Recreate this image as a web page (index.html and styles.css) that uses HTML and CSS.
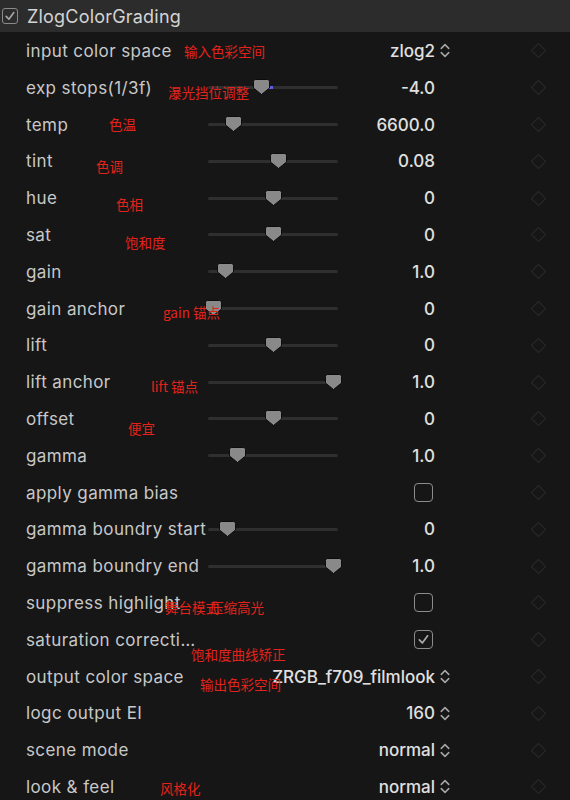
FILE: index.html
```html
<html lang="en">
<head>
  <meta charset="UTF-8" />
  <title>ZlogColorGrading</title>
  <link rel="stylesheet" href="styles.css">
</head>
<body>
  <div class="panel">
    <div class="header">
      <span class="box checked">
        <svg viewBox="0 0 12 12" width="12" height="12"><path d="M2.2 6.4 L4.9 9.2 L9.8 2.6" /></svg>
      </span>
      <span class="title">ZlogColorGrading</span>
    </div>

    <div class="rows">
      <div class="row">
        <span class="label">input color space</span>
        <span class="val select">zlog2<svg class="chev" viewBox="0 0 9 14"><path d="M1 5 L4.5 1.5 L8 5 M1 9 L4.5 12.5 L8 9" /></svg></span>
        <span class="key"></span>
        <span class="note n-input">输入色彩空间</span>
      </div>
      <div class="row">
        <span class="label">exp stops(1/3f)</span>
        <span class="slider" style="--v:0.4"><i class="fill"></i><svg class="thumb" viewBox="0 0 17 16"><path d="M2.5 0.5 H14.5 Q16.5 0.5 16.5 2.5 V9 L8.5 15.5 L0.5 9 V2.5 Q0.5 0.5 2.5 0.5Z" /></svg></span>
        <span class="val num">-4.0</span>
        <span class="key"></span>
        <span class="note n-exp">瀑光挡位调整</span>
      </div>
      <div class="row">
        <span class="label">temp</span>
        <span class="slider" style="--v:0.167"><svg class="thumb" viewBox="0 0 17 16"><path d="M2.5 0.5 H14.5 Q16.5 0.5 16.5 2.5 V9 L8.5 15.5 L0.5 9 V2.5 Q0.5 0.5 2.5 0.5Z" /></svg></span>
        <span class="val num">6600.0</span>
        <span class="key"></span>
        <span class="note n-temp">色温</span>
      </div>
      <div class="row">
        <span class="label">tint</span>
        <span class="slider" style="--v:0.542"><svg class="thumb" viewBox="0 0 17 16"><path d="M2.5 0.5 H14.5 Q16.5 0.5 16.5 2.5 V9 L8.5 15.5 L0.5 9 V2.5 Q0.5 0.5 2.5 0.5Z" /></svg></span>
        <span class="val num">0.08</span>
        <span class="key"></span>
        <span class="note n-tint">色调</span>
      </div>
      <div class="row">
        <span class="label">hue</span>
        <span class="slider" style="--v:0.5"><svg class="thumb" viewBox="0 0 17 16"><path d="M2.5 0.5 H14.5 Q16.5 0.5 16.5 2.5 V9 L8.5 15.5 L0.5 9 V2.5 Q0.5 0.5 2.5 0.5Z" /></svg></span>
        <span class="val num">0</span>
        <span class="key"></span>
        <span class="note n-hue">色相</span>
      </div>
      <div class="row">
        <span class="label">sat</span>
        <span class="slider" style="--v:0.5"><svg class="thumb" viewBox="0 0 17 16"><path d="M2.5 0.5 H14.5 Q16.5 0.5 16.5 2.5 V9 L8.5 15.5 L0.5 9 V2.5 Q0.5 0.5 2.5 0.5Z" /></svg></span>
        <span class="val num">0</span>
        <span class="key"></span>
        <span class="note n-sat">饱和度</span>
      </div>
      <div class="row">
        <span class="label">gain</span>
        <span class="slider" style="--v:0.108"><svg class="thumb" viewBox="0 0 17 16"><path d="M2.5 0.5 H14.5 Q16.5 0.5 16.5 2.5 V9 L8.5 15.5 L0.5 9 V2.5 Q0.5 0.5 2.5 0.5Z" /></svg></span>
        <span class="val num">1.0</span>
        <span class="key"></span>
      </div>
      <div class="row">
        <span class="label">gain anchor</span>
        <span class="slider" style="--v:0"><svg class="thumb" viewBox="0 0 17 16"><path d="M2.5 0.5 H14.5 Q16.5 0.5 16.5 2.5 V9 L8.5 15.5 L0.5 9 V2.5 Q0.5 0.5 2.5 0.5Z" /></svg></span>
        <span class="val num">0</span>
        <span class="key"></span>
        <span class="note n-gainanchor">gain 锚点</span>
      </div>
      <div class="row">
        <span class="label">lift</span>
        <span class="slider" style="--v:0.5"><svg class="thumb" viewBox="0 0 17 16"><path d="M2.5 0.5 H14.5 Q16.5 0.5 16.5 2.5 V9 L8.5 15.5 L0.5 9 V2.5 Q0.5 0.5 2.5 0.5Z" /></svg></span>
        <span class="val num">0</span>
        <span class="key"></span>
      </div>
      <div class="row">
        <span class="label">lift anchor</span>
        <span class="slider" style="--v:1"><svg class="thumb" viewBox="0 0 17 16"><path d="M2.5 0.5 H14.5 Q16.5 0.5 16.5 2.5 V9 L8.5 15.5 L0.5 9 V2.5 Q0.5 0.5 2.5 0.5Z" /></svg></span>
        <span class="val num">1.0</span>
        <span class="key"></span>
        <span class="note n-liftanchor">lift 锚点</span>
      </div>
      <div class="row">
        <span class="label">offset</span>
        <span class="slider" style="--v:0.5"><svg class="thumb" viewBox="0 0 17 16"><path d="M2.5 0.5 H14.5 Q16.5 0.5 16.5 2.5 V9 L8.5 15.5 L0.5 9 V2.5 Q0.5 0.5 2.5 0.5Z" /></svg></span>
        <span class="val num">0</span>
        <span class="key"></span>
        <span class="note n-offset">便宜</span>
      </div>
      <div class="row">
        <span class="label">gamma</span>
        <span class="slider" style="--v:0.2"><svg class="thumb" viewBox="0 0 17 16"><path d="M2.5 0.5 H14.5 Q16.5 0.5 16.5 2.5 V9 L8.5 15.5 L0.5 9 V2.5 Q0.5 0.5 2.5 0.5Z" /></svg></span>
        <span class="val num">1.0</span>
        <span class="key"></span>
      </div>
      <div class="row">
        <span class="label">apply gamma bias</span>
        <span class="val check"><span class="box big"></span></span>
        <span class="key"></span>
      </div>
      <div class="row">
        <span class="label">gamma boundry start</span>
        <span class="slider" style="--v:0.117"><svg class="thumb" viewBox="0 0 17 16"><path d="M2.5 0.5 H14.5 Q16.5 0.5 16.5 2.5 V9 L8.5 15.5 L0.5 9 V2.5 Q0.5 0.5 2.5 0.5Z" /></svg></span>
        <span class="val num">0</span>
        <span class="key"></span>
      </div>
      <div class="row">
        <span class="label">gamma boundry end</span>
        <span class="slider" style="--v:1"><svg class="thumb" viewBox="0 0 17 16"><path d="M2.5 0.5 H14.5 Q16.5 0.5 16.5 2.5 V9 L8.5 15.5 L0.5 9 V2.5 Q0.5 0.5 2.5 0.5Z" /></svg></span>
        <span class="val num">1.0</span>
        <span class="key"></span>
      </div>
      <div class="row">
        <span class="label">suppress highlight</span>
        <span class="val check"><span class="box big"></span></span>
        <span class="key"></span>
        <span class="note n-stage">舞台模式</span>
        <span class="note n-suppress">压缩高光</span>
      </div>
      <div class="row">
        <span class="label short">saturation correction</span>
        <span class="val check"><span class="box big checked"><svg viewBox="0 0 12 12" width="13" height="13"><path d="M2.2 6.4 L4.9 9.2 L9.8 2.6" /></svg></span></span>
        <span class="key"></span>
        <span class="note n-satcorr">饱和度曲线矫正</span>
      </div>
      <div class="row">
        <span class="label">output color space</span>
        <span class="val select">ZRGB_f709_filmlook<svg class="chev" viewBox="0 0 9 14"><path d="M1 5 L4.5 1.5 L8 5 M1 9 L4.5 12.5 L8 9" /></svg></span>
        <span class="key"></span>
        <span class="note n-output">输出色彩空间</span>
      </div>
      <div class="row">
        <span class="label">logc output EI</span>
        <span class="val select">160<svg class="chev" viewBox="0 0 9 14"><path d="M1 5 L4.5 1.5 L8 5 M1 9 L4.5 12.5 L8 9" /></svg></span>
        <span class="key"></span>
      </div>
      <div class="row">
        <span class="label">scene mode</span>
        <span class="val select">normal<svg class="chev" viewBox="0 0 9 14"><path d="M1 5 L4.5 1.5 L8 5 M1 9 L4.5 12.5 L8 9" /></svg></span>
        <span class="key"></span>
      </div>
      <div class="row">
        <span class="label">look &amp; feel</span>
        <span class="val select">normal<svg class="chev" viewBox="0 0 9 14"><path d="M1 5 L4.5 1.5 L8 5 M1 9 L4.5 12.5 L8 9" /></svg></span>
        <span class="key"></span>
        <span class="note n-look">风格化</span>
      </div>
    </div>
  </div>
</body>
</html>
```

FILE: styles.css
```css
* {
  margin: 0;
  padding: 0;
  box-sizing: border-box;
}

body {
  background: #161616;
  color: #c6c6c6;
  font-family: Inter, "Noto Sans", sans-serif;
  overflow: hidden;
}

.panel {
  width: 570px;
  height: 800px;
}

.header {
  height: 32px;
  background: #2c2c2c;
  display: flex;
  align-items: center;
  padding-left: 2px;
  gap: 9px;
}

.title {
  font-size: 18px;
  color: #d4d4d4;
  letter-spacing: 0.2px;
}

.box {
  width: 16px;
  height: 16px;
  border: 1.5px solid #8a8a8a;
  border-radius: 3px;
  display: flex;
  align-items: center;
  justify-content: center;
}

.box svg {
  fill: none;
  stroke: #a8a8a8;
  stroke-width: 1.6;
  stroke-linecap: round;
  stroke-linejoin: round;
}

.box.big {
  width: 19px;
  height: 19px;
  border-radius: 4px;
  border-color: #8c8c8c;
}

.rows {
  padding-top: 0.6px;
}

.row {
  position: relative;
  height: 36.8px;
  display: grid;
  grid-template-columns: 182px 130px 1fr 118px;
  align-items: center;
  padding-left: 26px;
}

.label {
  grid-column: 1;
  font-size: 17px;
  letter-spacing: 0.4px;
  white-space: nowrap;
  overflow: hidden;
  text-overflow: ellipsis;
  color: #c8c8c8;
}

.label.short {
  max-width: 173px;
}

.slider {
  grid-column: 2;
  position: relative;
  height: 3px;
  background: #2f2f2f;
  border-radius: 2px;
}

.fill {
  position: absolute;
  top: 0;
  left: calc(var(--v) * 120px + 5px);
  width: calc((0.5 - var(--v)) * 120px);
  height: 3px;
  background: #5c5ce8;
}

.thumb {
  position: absolute;
  width: 17px;
  height: 16px;
  top: -7px;
  left: calc(var(--v) * 120px - 3.5px);
}

.thumb path {
  fill: #898989;
  stroke: #0c0c0c;
  stroke-width: 1;
}

.val {
  grid-column: 3;
  display: flex;
  justify-content: flex-end;
  align-items: center;
  font-size: 17px;
  font-weight: 500;
  color: #e0e0e0;
  white-space: nowrap;
}

.val.num {
  padding-right: 17px;
}

.val.check {
  grid-column: 2 / 4;
  padding-right: 19px;
}

.val.select {
  grid-column: 2 / 4;
  padding-right: 2px;
  gap: 5px;
}

.chev {
  width: 10px;
  height: 15px;
  fill: none;
  stroke: #a6a6a6;
  stroke-width: 1.4;
  stroke-linecap: round;
  stroke-linejoin: round;
}

.key {
  grid-column: 4;
  justify-self: start;
  margin-left: 81px;
  width: 11px;
  height: 11px;
  border: 1.5px solid #2a2a2a;
  transform: rotate(45deg);
}

.note {
  position: absolute;
  font-size: 13.5px;
  line-height: 18px;
  color: #e3231b;
  font-family: "Noto Sans CJK SC", Inter, sans-serif;
  white-space: nowrap;
}

.n-input { left: 184px; top: 9px; }
.n-exp { left: 168px; top: 14px; }
.n-temp { left: 109px; top: 9px; }
.n-tint { left: 96px; top: 14px; }
.n-hue { left: 116px; top: 15px; }
.n-sat { left: 125px; top: 16px; }
.n-gainanchor { left: 163px; top: 13px; }
.n-liftanchor { left: 151px; top: 13px; }
.n-offset { left: 128px; top: 18px; }
.n-stage { left: 165px; top: 13px; }
.n-suppress { left: 210px; top: 13px; }
.n-satcorr { left: 191px; top: 24px; }
.n-output { left: 200px; top: 17px; }
.n-look { left: 160px; top: 10px; }
```
